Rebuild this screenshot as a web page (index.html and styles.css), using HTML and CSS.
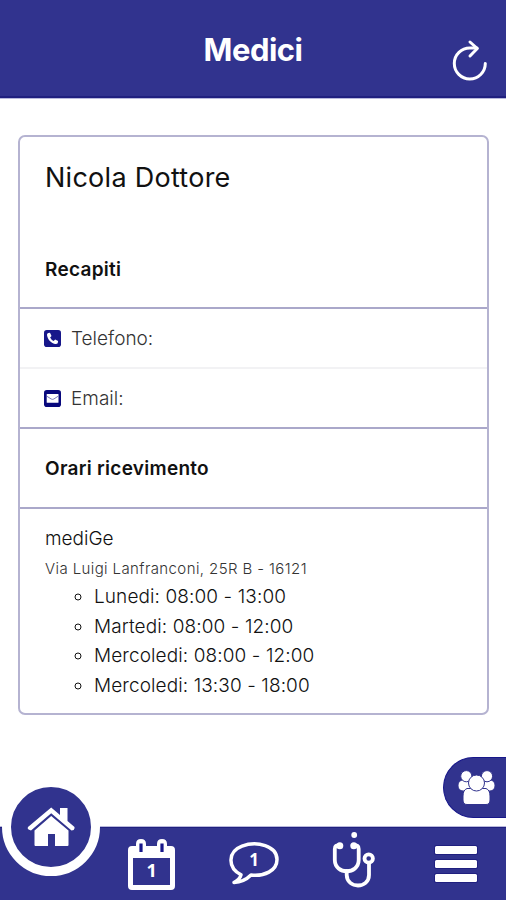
FILE: index.html
```html
<!DOCTYPE html>
<html lang="it">
<head>
<meta charset="utf-8">
<title>Medici</title>
<link rel="stylesheet" href="styles.css">
</head>
<body>
<div class="app">
  <header class="header">
    <h1 class="title">Medici</h1>
    <svg class="refresh" width="38" height="44" viewBox="0 0 38 44" fill="none" stroke="#fff" stroke-width="3" stroke-linecap="round" stroke-linejoin="round">
      <path d="M34.3 24.5A15.5 15.5 0 1 1 19 9H26"/><path d="M19 3L26.3 9.5L19 17"/>
    </svg>
  </header>
  <main class="content">
    <section class="card">
      <h2 class="name">Nicola Dottore</h2>
      <h3 class="heading contacts">Recapiti</h3>
      <div class="row divided">
        <svg class="row-icon" width="17" height="17" viewBox="0 0 17 17"><rect width="17" height="17" rx="2.8" fill="#17178a"/><path d="M4.3 3L6 2.7L7.5 6L6.1 7.4Q7.4 10 9.7 11L11.1 9.6L14.1 11L13.7 13.2Q12.8 14.3 11 13.9C6.8 13 3.5 9.4 3 5Q2.8 3.6 4.3 3Z" fill="#fff"/></svg>
        <span class="phone-label">Telefono:</span>
      </div>
      <div class="row">
        <svg class="row-icon" width="17" height="17" viewBox="0 0 17 17"><rect width="17" height="17" rx="2.8" fill="#08087c"/><rect x="2.7" y="4" width="11.8" height="8.8" rx=".6" fill="#fff"/><path d="M3 6.3L7.2 9Q8.5 9.8 9.8 9L14 6.3" fill="none" stroke="#6d6db5" stroke-width=".9"/></svg>
        <span class="email-label">Email:</span>
      </div>
      <h3 class="heading hours">Orari ricevimento</h3>
      <div class="office">
        <div class="office-name">mediGe</div>
        <div class="address">Via Luigi Lanfranconi, 25R B - 16121</div>
        <ul class="times">
          <li>Lunedi: 08:00 - 13:00</li>
          <li>Martedi: 08:00 - 12:00</li>
          <li>Mercoledi: 08:00 - 12:00</li>
          <li>Mercoledi: 13:30 - 18:00</li>
        </ul>
      </div>
    </section>
  </main>
  <div class="group">
    <svg width="38" height="36" viewBox="0 0 38 36" fill="#fff" stroke="#31338e" stroke-width="1">
      <rect x="0" y="10" width="14" height="11" rx="5"/><rect x="23" y="10" width="14" height="11" rx="5"/>
      <circle cx="8.3" cy="6.2" r="5.6"/><circle cx="29" cy="6.2" r="5.6"/>
      <path d="M9 18.5H28Q32 20 32 26V30Q32 34.5 28 34.5H9Q5 34.5 5 30V26Q5 20 9 18.5Z"/>
      <circle cx="18.5" cy="13" r="8"/>
    </svg>
  </div>
  <nav class="nav">
    <div class="item">
      <svg width="47" height="52" viewBox="0 0 47 52">
        <path fill="#fff" fill-rule="evenodd" d="M4 7H8V5Q8 0 13 0T18 5V7H29V5Q29 0 34 0T39 5V7H43Q47 7 47 11V47Q47 51 43 51H4Q0 51 0 47V11Q0 7 4 7ZM5 19V46H42V19Z"/>
        <path d="M13 4.5V13M34 4.5V13" stroke="#17178a" stroke-width="3.2"/>
        <text x="23.7" y="37.5" text-anchor="middle" class="date">1</text>
      </svg>
    </div>
    <div class="item">
      <svg width="51" height="44" viewBox="0 0 51 44">
        <path d="M12 32.8C-2 25.5-1 9.5 13 4.2C28-1.5 48 4 48 17.5C48 29 35 34.5 22 33Q15 40 5 40.5Q11 37 12 32.8Z" fill="none" stroke="#fff" stroke-width="3.5" stroke-linejoin="round"/>
        <text x="25" y="23.5" text-anchor="middle" class="count">1</text>
      </svg>
    </div>
    <div class="item">
      <svg width="43" height="56" viewBox="0 0 43 56" fill="none" stroke="#fff" stroke-width="3.8" stroke-linecap="round">
        <path d="M7.5 13.5Q3 12.5 2.8 17V28C3 43 26.5 43 26.7 28V17Q26.5 12.5 22 13.5"/>
        <path d="M14.7 39V43C15 57 37 57 37 43V32"/>
        <circle cx="36.7" cy="26.5" r="4.2"/>
        <g fill="#fff" stroke="none"><circle cx="7.8" cy="13.7" r="3.5"/><circle cx="21.8" cy="13.7" r="3.5"/><circle cx="22.2" cy="3" r="2.9"/></g>
      </svg>
    </div>
    <div class="item">
      <div class="bars"><i></i><i></i><i></i></div>
    </div>
  </nav>
  <div class="home">
    <svg width="48" height="40" viewBox="0 0 48 40" fill="#fff">
      <path d="M24.2 .5L33 8V1H40.5V14L47.5 20Q48 21 46.7 23L44.5 23.5L24.2 6.3L4 23.5L1.5 22.5Q0 21 1 20Z"/>
      <path d="M24.2 9L41.5 23.5V38Q41.5 39 40.5 39H28V27H21V39H8.5Q7.5 39 7.5 38V23.5Z"/>
    </svg>
  </div>
</div>
</body>
</html>
```

FILE: styles.css
```css
* { box-sizing: border-box; }
body { margin: 0; background: #fff; color: #111; font-family: Inter, sans-serif; }
.app { position: relative; display: flex; flex-direction: column; width: 506px; height: 900px; overflow: hidden; }
.header { position: relative; height: 98px; flex: none; background: #31338e; border-bottom: 2px solid #20207f; box-shadow: 0 1px #b9b9dc; text-align: center; }
.title { margin: 0; color: #fff; font: 700 31px/36px Inter, sans-serif; padding-top: 32px; letter-spacing: -.5px; }
.refresh { position: absolute; left: 451px; top: 39px; }
.content { flex: 1; padding: 37px 17px 0 18px; }
.card { height: 580px; border: 2px solid #b5b3d1; border-radius: 7px; }
.name { margin: 0; padding: 23px 0 0 25px; height: 93px; font-size: 27px; line-height: 36px; font-weight: 400; letter-spacing: .27px; }
.heading { margin: 0; padding-left: 25px; font-size: 19px; font-weight: 600; letter-spacing: .28px; display: flex; align-items: center; border-bottom: 2px solid #aaa8ca; }
.contacts { height: 79px; padding-top: 2px; }
.hours { height: 80px; }
.row { display: flex; align-items: center; gap: 10px; height: 60px; padding-left: 24px; border-bottom: 2px solid #aaa8ca; font-size: 19px; font-weight: 300; color: #333; }
.divided { border-color: #f2f2f4; }
.office { padding: 17px 0 0 25px; font-weight: 300; }
.office-name { font-size: 19px; line-height: 26px; }
.address { margin-top: 5px; font-size: 15px; line-height: 24px; color: #333; letter-spacing: .4px; }
.times { margin: 1.3px 0 0; padding-left: 49px; list-style: circle; font-size: 19px; line-height: 29.4px; letter-spacing: .1px; }
.group { position: absolute; left: 443px; top: 757px; width: 63px; height: 61px; padding: 12px 0 0 14px; border-radius: 31px 0 0 31px; background: #31338e; border: 1px solid #17178a; border-right: 0; }
.group svg { display: block; }
.nav { display: grid; grid-template-columns: repeat(4, 101px); padding-left: 101px; height: 73px; flex: none; background: #31338e; border-top: 1px solid #20207f; box-shadow: 0 -1px #b9b9dc; }
.item { display: flex; justify-content: center; align-items: flex-start; padding-top: 11px; }
.item:nth-child(2) { padding: 14px 0 0 3px; }
.item:nth-child(3) { padding-top: 4px; }
.item:nth-child(4) { padding: 18px 0 0 2px; }
.date { fill: #fff; font: 700 18px "Noto Sans", sans-serif; }
.count { fill: #fff; font: 700 17px "Noto Sans", sans-serif; }
.bars { display: grid; gap: 6px; }
.bars i { width: 42px; height: 8px; border-radius: 1.5px; background: #fff; box-shadow: 0 0 0 1px #20207f; }
.home { position: absolute; left: 2px; top: 778px; width: 98px; height: 98px; border: 9px solid #fff; border-radius: 50%; background: #31338e; display: flex; align-items: center; justify-content: center; }
```
